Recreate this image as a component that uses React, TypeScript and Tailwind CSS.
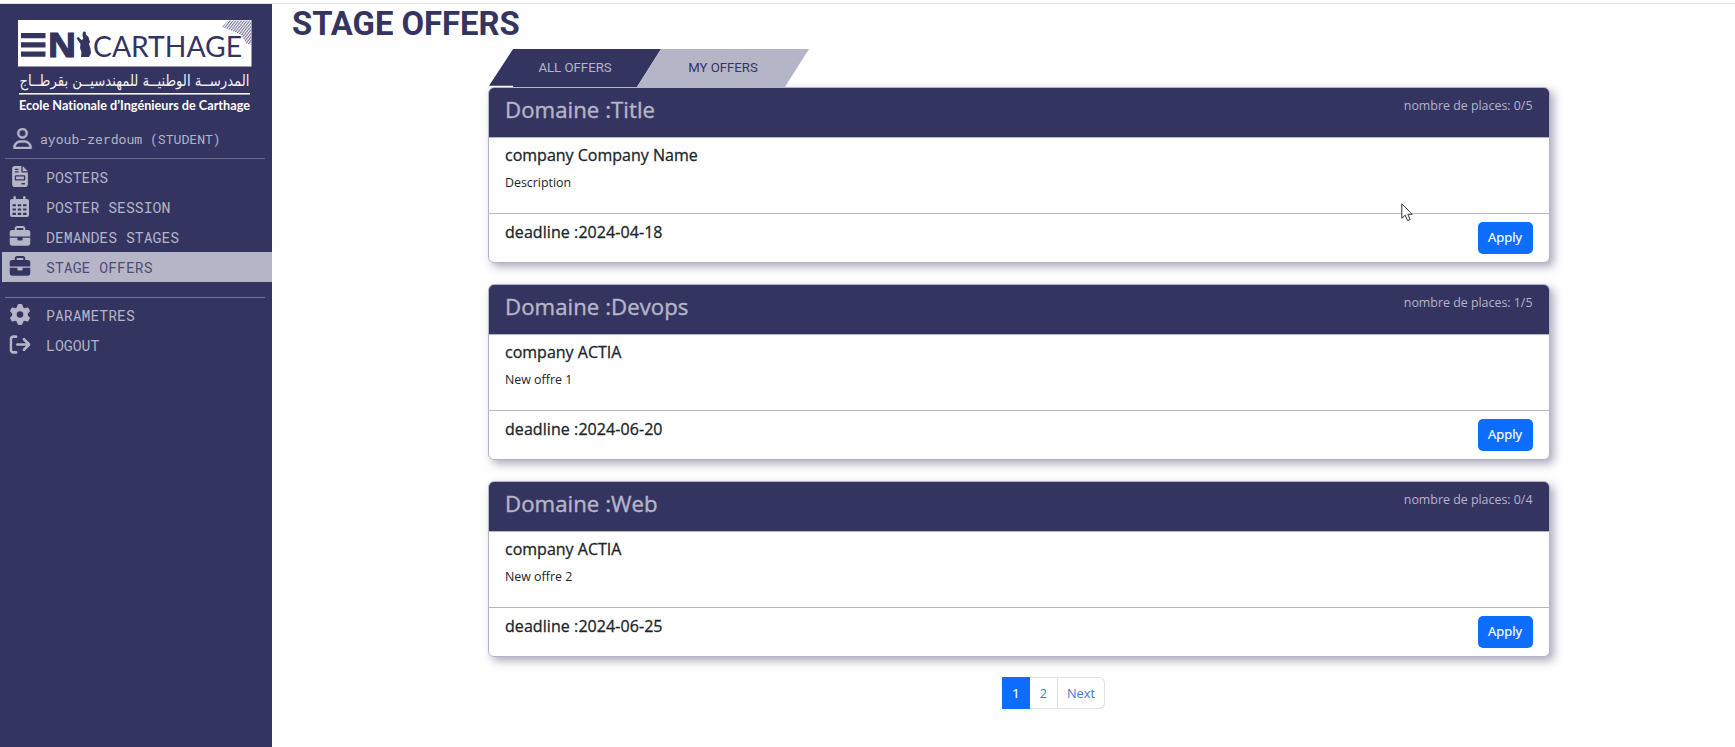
import React from "react";
import {
  FaRegUser,
  FaFileInvoice,
  FaBriefcase,
  FaGear,
  FaArrowRightFromBracket,
} from "react-icons/fa6";

type Offer = {
  domain: string;
  places: string;
  company: string;
  description: string;
  deadline: string;
};

const offers: Offer[] = [
  { domain: "Title", places: "0/5", company: "Company Name", description: "Description", deadline: "2024-04-18" },
  { domain: "Devops", places: "1/5", company: "ACTIA", description: "New offre 1", deadline: "2024-06-20" },
  { domain: "Web", places: "0/4", company: "ACTIA", description: "New offre 2", deadline: "2024-06-25" },
];

function Logo() {
  return (
    <svg width="234" height="96" viewBox="18 20 234 96" className="block overflow-visible" role="img">
      <defs>
        <pattern id="hatch" width="2.2" height="2.2" patternUnits="userSpaceOnUse" patternTransform="rotate(-52)">
          <rect width="2.2" height="1.1" fill="#77769a" />
        </pattern>
      </defs>
      <rect x="18" y="20" width="233.5" height="46.5" fill="#fff" />
      <path d="M222 27l6-6.500h23v24l-5-1-5-9z" fill="url(#hatch)" />
      <g fill="#343461">
        <path d="M21 33h24.500v5.200H21zM21 42.300h24.500v5.200H21zM21 51.500h24.500v5.200H21z" />
        <path d="M83 32c2-1 3.400 0 2.800 2.500l2.700 2.500 1.500 5-1 2 1.500 5 .5 4-2 4h-8l.5-5-1.500-4 .5-4-4-6 2-1 3 3 1.800-1-.8-4z" />
      </g>
      <text x="47.500" y="57" fill="#343461" stroke="#343461" strokeWidth="1.2" fontFamily="Open Sans" fontWeight="700" fontSize="33.500" textLength="29" lengthAdjust="spacingAndGlyphs">N</text>
      <text x="93" y="57" fill="#343461" fontFamily="Lato" fontSize="29.500" textLength="149" lengthAdjust="spacingAndGlyphs">CARTHAGE</text>
      <text x="249.500" y="85.500" fill="#f2f2f7" direction="rtl" fontFamily="DejaVu Sans" fontSize="15.500" textLength="230" lengthAdjust="spacingAndGlyphs">المدرســة الوطنيــة للمهندسيــن بقرطــاج</text>
      <rect x="19" y="93" width="231" height="1.600" fill="#f2f2f7" />
      <text x="19" y="110" fill="#fff" fontFamily="Lato" fontWeight="700" fontSize="12.500" textLength="231" lengthAdjust="spacingAndGlyphs" style={{ fontVariantLigatures: "none" }}>Ecole Nationale d’Ingénieurs de Carthage</text>
    </svg>
  );
}

function CalendarIcon() {
  return (
    <svg width="20" height="21" viewBox="0 0 20 21" fill="currentColor">
      <path
        fillRule="evenodd"
        d="M4 1.200a1.200 1.200 0 0 1 2.400 0V3h7.200V1.200a1.200 1.200 0 0 1 2.400 0V3h1.500a2 2 0 0 1 2 2v14a2 2 0 0 1-2 2h-15a2 2 0 0 1-2-2V5a2 2 0 0 1 2-2H4zM3 8.300v2h3.400v-2zm5.300 0v2h3.400v-2zm5.300 0v2H17v-2zM3 12.400v2.200h3.400v-2.200zm5.300 0v2.200h3.400v-2.200zm5.300 0v2.200H17v-2.200zM3 16.700V19h3.400v-2.300zm5.300 0V19h3.400v-2.300zm5.300 0V19H17v-2.300z"
      />
    </svg>
  );
}

function NavItem({ icon, label, active }: { icon: React.ReactNode; label: string; active?: boolean }) {
  return (
    <li className={active ? "ml-0.5 flex h-[30px] items-center bg-[#b5b5c8] pl-[7px] text-[#343461]" : "flex h-[30px] items-center pl-[9px] text-[#b5b5c8]"}>
      <span className="flex w-[22px] -translate-x-[0.5px] -translate-y-px justify-center text-[21px]">{icon}</span>
      <span className={active ? "ml-[15px] text-[14.800px] text-[#4d4c72]" : "ml-[15px] text-[14.800px]"}>{label}</span>
    </li>
  );
}

function Sidebar() {
  return (
    <aside className="h-[743px] w-[272px] shrink-0 bg-[#343461] pt-4 font-['Roboto_Mono','DejaVu_Sans_Mono',monospace] text-[#b5b5c8]">
      <div className="pl-[18px]"><Logo /></div>
      <div className="flex h-[42px] items-center pl-3">
        <FaRegUser className="h-[21px] w-[21px] translate-y-px" stroke="currentColor" strokeWidth={12} />
        <span className="ml-[7px] translate-y-[3px] text-[13.100px]">ayoub-zerdoum (STUDENT)</span>
      </div>
      <div className="mr-[7px] ml-[5px] h-0 border-t border-[#66658a]" />
      <ul className="mt-[3px]">
        <NavItem icon={<FaFileInvoice />} label="POSTERS" />
        <NavItem icon={<CalendarIcon />} label="POSTER SESSION" />
        <NavItem icon={<FaBriefcase />} label="DEMANDES STAGES" />
        <NavItem icon={<FaBriefcase />} label="STAGE OFFERS" active />
      </ul>
      <div className="mt-[15px] mr-[7px] ml-[5px] h-0 border-t border-[#75749a]" />
      <ul className="mt-[2px]">
        <NavItem icon={<FaGear />} label="PARAMETRES" />
        <NavItem icon={<FaArrowRightFromBracket />} label="LOGOUT" />
      </ul>
    </aside>
  );
}

function OfferCard({ offer }: { offer: Offer }) {
  return (
    <article className="flex h-[176px] flex-col overflow-hidden rounded-[6px] border border-[#b5b5c8] bg-white shadow-[4px_4px_9px_rgba(52,52,97,0.4)]">
      <header className="flex h-[50px] shrink-0 justify-between border-b border-[#b5b5c8] bg-[#343461] px-4 text-[#b5b5c8]">
        <h2 className="pt-[6px] text-[22.200px] leading-8 font-medium tracking-[0.05px] [-webkit-text-stroke:0.4px_currentColor]">Domaine :{offer.domain}</h2>
        <span className="pt-[8px] text-[12.400px] leading-5">nombre de places: {offer.places}</span>
      </header>
      <div className="h-[76px] shrink-0 border-b border-[#b5b5c8] px-4 pt-[7px] text-[#212529]">
        <h3 className="text-[16px] leading-5 font-medium [-webkit-text-stroke:0.3px_currentColor]">company {offer.company}</h3>
        <p className="mt-[8px] text-[12.400px] leading-5">{offer.description}</p>
      </div>
      <footer className="flex justify-between px-4 pt-2 text-[#212529]">
        <h3 className="text-[16px] leading-5 font-medium tracking-[0.07px] [-webkit-text-stroke:0.3px_currentColor]">deadline :{offer.deadline}</h3>
        <button className="h-[32px] w-[55px] rounded-[5px] bg-[#0d6efd] text-[13px] text-white [-webkit-text-stroke:0.2px_currentColor]">Apply</button>
      </footer>
    </article>
  );
}

export default function App() {
  return (
    <div className="h-[747px] w-[1735px] overflow-hidden bg-[#fefefe] pt-[3px] font-['Open_Sans','Noto_Sans',sans-serif]">
      <div className="h-px bg-[#e3e2e8]" />
      <div className="flex">
        <Sidebar />
        <main className="flex-1">
          <h1 className="ml-5 h-[45px] font-[Roboto] text-[32.800px] leading-[40px] font-bold text-[#343461]">STAGE OFFERS</h1>
          <div className="ml-[216px] w-[1061.500px]">
            <nav className="flex h-[38px] items-start pl-px font-[Roboto] text-[13.200px]">
              <button className="h-[38px] w-[172px] shrink-0 bg-[#343461] text-[#b5b5c8] [clip-path:polygon(14%_0,100%_0,86%_100%,14%_100%,14%_97%,0_97%)]">ALL OFFERS</button>
              <button className="-ml-6 h-[38px] w-[172px] shrink-0 bg-[#b5b5c8] text-[#343461] [clip-path:polygon(14%_0,100%_0,86%_100%,0_100%)]">MY OFFERS</button>
            </nav>
            <div className="flex flex-col gap-[20.800px]">
              {offers.map((o) => <OfferCard key={o.domain} offer={o} />)}
            </div>
            <nav className="mt-[20.500px] ml-[514px] flex h-8 w-[103px] text-[12.800px] text-[#3b78e0]">
              <button className="w-7 bg-[#0d6efd] text-white [-webkit-text-stroke:0.2px_currentColor]">1</button>
              <button className="w-7 border-y border-r border-[#dee2e6] bg-white">2</button>
              <button className="flex-1 rounded-r-[6px] border-y border-r border-[#dee2e6] bg-white">Next</button>
            </nav>
          </div>
        </main>
      </div>
      <svg className="pointer-events-none absolute top-[203px] left-[1401px]" width="13" height="19" viewBox="0 0 13 19">
        <path d="M.8.8v14.400l3.400-3 2.400 5.400 2.600-1.100-2.400-5.200h4.400z" fill="#fff" stroke="#333" strokeWidth="1" />
      </svg>
    </div>
  );
}
